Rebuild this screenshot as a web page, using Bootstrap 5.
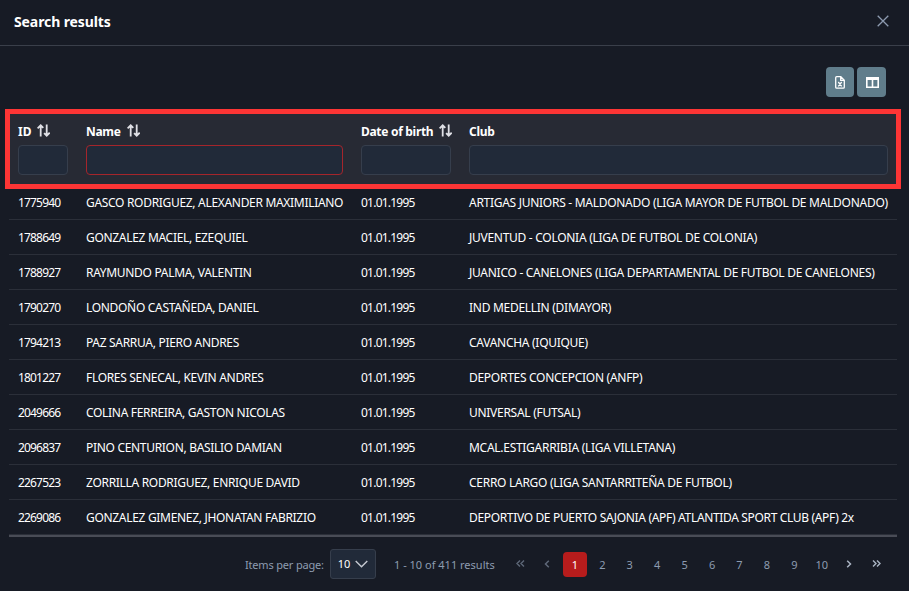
<!DOCTYPE html>
<html lang="en" data-bs-theme="dark">
<head>
<meta charset="utf-8">
<meta name="viewport" content="width=device-width, initial-scale=1">
<title>Search results</title>
<link href="https://cdn.jsdelivr.net/npm/bootstrap@5.3.0/dist/css/bootstrap.min.css" rel="stylesheet">
<style>
body{background:#171b25;color:#fff;font:12px/18px "Noto Sans",sans-serif;height:591px;overflow:hidden}
.dialog-head{height:46px;border-bottom:1px solid #3a3f4a;padding:0 20px 2px 14px}
.dialog-head h1{font-size:14px;font-weight:700;letter-spacing:-.1px;padding-top:2px}
.dialog-head svg{margin-bottom:2px}
.tools{height:63px;padding:21px 23px 0 0;gap:3px}
.tool-btn{width:28px;height:30px;background:#607d8b;border-radius:4px;border:0}
.tool-btn.wide{width:29px;padding-left:1px!important}
.results{padding:0 12px 0 9px}
.grid{table-layout:fixed;width:888px;border-collapse:separate;border-spacing:0;border-bottom:2px solid #494c56}
.grid th{background:#272a34;height:76px;padding:13px 9px 0;vertical-align:top}
.grid th .cap{height:19px;gap:6px;white-space:nowrap;font-weight:700;letter-spacing:-.3px}
.grid th:first-child .cap{letter-spacing:0}
.grid th .cap svg{margin-bottom:2px}
.grid th input{height:30px;margin-top:4px;background:#212a39;border:1px solid #363e4c;border-radius:4px;padding:0}
.grid th input.invalid{border-color:#a5252b}
.grid td{height:35px;padding:2px 9px 0;border-bottom:1px solid #2b2f39;white-space:nowrap;vertical-align:middle;letter-spacing:-.28px}
.grid td:nth-child(1){letter-spacing:-.83px}
.grid td:nth-child(2){letter-spacing:-.31px}
.grid td:nth-child(3){letter-spacing:-.77px}
.grid tr:last-child td:last-child{letter-spacing:-.34px}
.outline-frame{left:5px;top:109px;width:896px;height:80px;border:5px solid #fd3535}
.pager{height:54px;color:#8d9bb0;font-size:11px;padding-left:245px}
.items-label{width:85px;letter-spacing:-.18px;padding-top:1px}
.range-label{width:132px;padding:1px 0 0 18px}
.size-btn{width:46px;height:30px;background:#212a39;border:1px solid #363e4c;border-radius:3px;color:#fff;font-size:11px;gap:5px;padding:0}
.pg{width:24px;height:25px;margin-right:3.45px;border-radius:4px;padding-top:2px}
.pg svg{margin-bottom:3px}
.pg.current{background:#b71c1c;color:#fff}
.dim{opacity:.6}
svg{display:block;flex:none}
</style>
</head>
<body>
<svg width="0" height="0" class="position-absolute"><defs>
<g id="sort" fill="none" stroke="#dfe0e6" stroke-width="1.8"><path d="M3.7 12.5V1.7M.6 4.4 3.7 1.3 6.3 3.9M9.7.5v11M7.1 9.1l2.6 2.6 3-3"/></g>
</defs></svg>
<header class="dialog-head d-flex align-items-center justify-content-between">
<h1 class="m-0">Search results</h1>
<svg width="12" height="12" fill="none" stroke="#8d9bb0" stroke-width="1.3"><path d="M.7.7l10.6 10.6M11.3.7.7 11.3"/></svg>
</header>
<div class="tools d-flex justify-content-end">
<button class="tool-btn d-flex align-items-center justify-content-center p-0" aria-label="Export"><svg width="10" height="13" fill="none" stroke="#fff" stroke-width="1.3"><path d="M1.7.7h4.1l3.5 3.5v7q0 1-1 1H1.7q-1 0-1-1V1.7q0-1 1-1zM5.7.9v3.4h3.5M3.3 6l3.4 4.4M6.7 6l-3.4 4.4"/></svg></button>
<button class="tool-btn wide d-flex align-items-center justify-content-center p-0" aria-label="Columns"><svg width="13" height="11" fill="none" stroke="#fff" stroke-width="1.6"><path d="M.8.8h11.4v9.4H.8zM6.5 1v9"/><path d="M0 1.5h13" stroke-width="3"/></svg></button>
</div>
<main class="results">
<table class="grid">
<colgroup><col style="width:68px"><col style="width:275px"><col style="width:108px"><col style="width:437px"></colgroup>
<thead><tr>
<th><div class="cap d-flex align-items-center">ID <svg width="13" height="13"><use href="#sort"/></svg></div><input class="form-control" aria-label="ID"></th>
<th><div class="cap d-flex align-items-center">Name <svg width="13" height="13"><use href="#sort"/></svg></div><input class="form-control invalid" aria-label="Name"></th>
<th><div class="cap d-flex align-items-center">Date of birth <svg width="13" height="13"><use href="#sort"/></svg></div><input class="form-control" aria-label="Date of birth"></th>
<th><div class="cap d-flex align-items-center">Club</div><input class="form-control" aria-label="Club"></th>
</tr></thead>
<tbody>
<tr><td>1775940</td><td>GASCO RODRIGUEZ, ALEXANDER MAXIMILIANO</td><td>01.01.1995</td><td>ARTIGAS JUNIORS - MALDONADO (LIGA MAYOR DE FUTBOL DE MALDONADO)</td></tr>
<tr><td>1788649</td><td>GONZALEZ MACIEL, EZEQUIEL</td><td>01.01.1995</td><td>JUVENTUD - COLONIA (LIGA DE FUTBOL DE COLONIA)</td></tr>
<tr><td>1788927</td><td>RAYMUNDO PALMA, VALENTIN</td><td>01.01.1995</td><td>JUANICO - CANELONES (LIGA DEPARTAMENTAL DE FUTBOL DE CANELONES)</td></tr>
<tr><td>1790270</td><td>LONDOÑO CASTAÑEDA, DANIEL</td><td>01.01.1995</td><td>IND MEDELLIN (DIMAYOR)</td></tr>
<tr><td>1794213</td><td>PAZ SARRUA, PIERO ANDRES</td><td>01.01.1995</td><td>CAVANCHA (IQUIQUE)</td></tr>
<tr><td>1801227</td><td>FLORES SENECAL, KEVIN ANDRES</td><td>01.01.1995</td><td>DEPORTES CONCEPCION (ANFP)</td></tr>
<tr><td>2049666</td><td>COLINA FERREIRA, GASTON NICOLAS</td><td>01.01.1995</td><td>UNIVERSAL (FUTSAL)</td></tr>
<tr><td>2096837</td><td>PINO CENTURION, BASILIO DAMIAN</td><td>01.01.1995</td><td>MCAL.ESTIGARRIBIA (LIGA VILLETANA)</td></tr>
<tr><td>2267523</td><td>ZORRILLA RODRIGUEZ, ENRIQUE DAVID</td><td>01.01.1995</td><td>CERRO LARGO (LIGA SANTARRITEÑA DE FUTBOL)</td></tr>
<tr><td>2269086</td><td>GONZALEZ GIMENEZ, JHONATAN FABRIZIO</td><td>01.01.1995</td><td>DEPORTIVO DE PUERTO SAJONIA (APF) ATLANTIDA SPORT CLUB (APF) 2x</td></tr>
</tbody>
</table>
</main>
<footer class="pager d-flex align-items-center">
<span class="items-label">Items per page:</span>
<button class="size-btn d-flex align-items-center justify-content-center">10 <svg width="13" height="8" fill="none" stroke="#c6cad2" stroke-width="1.4"><path d="M.7 1l5.8 5.8L12.3 1"/></svg></button>
<span class="range-label">1 - 10 of 411 results</span>
<nav class="d-flex align-items-center" aria-label="Pages">
<span class="pg dim d-flex align-items-center justify-content-center"><svg width="9" height="7" fill="none" stroke="#8d9bb0" stroke-width="1.4"><path d="M4 .5l-3 3 3 3M8 .5l-3 3 3 3"/></svg></span>
<span class="pg dim d-flex align-items-center justify-content-center"><svg width="6" height="8" fill="none" stroke="#8d9bb0" stroke-width="1.5"><path d="M4.8.7 1.5 4l3.3 3.3"/></svg></span>
<span class="pg current d-flex align-items-center justify-content-center">1</span>
<span class="pg d-flex align-items-center justify-content-center">2</span>
<span class="pg d-flex align-items-center justify-content-center">3</span>
<span class="pg d-flex align-items-center justify-content-center">4</span>
<span class="pg d-flex align-items-center justify-content-center">5</span>
<span class="pg d-flex align-items-center justify-content-center">6</span>
<span class="pg d-flex align-items-center justify-content-center">7</span>
<span class="pg d-flex align-items-center justify-content-center">8</span>
<span class="pg d-flex align-items-center justify-content-center">9</span>
<span class="pg d-flex align-items-center justify-content-center">10</span>
<span class="pg d-flex align-items-center justify-content-center"><svg width="6" height="8" fill="none" stroke="#aab4c3" stroke-width="1.5"><path d="M1.2.7 4.5 4 1.2 7.3"/></svg></span>
<span class="pg d-flex align-items-center justify-content-center"><svg width="9" height="7" fill="none" stroke="#aab4c3" stroke-width="1.4"><path d="M1 .5l3 3-3 3M5 .5l3 3-3 3"/></svg></span>
</nav>
</footer>
<div class="outline-frame position-absolute"></div>
<script src="https://cdn.jsdelivr.net/npm/bootstrap@5.3.0/dist/js/bootstrap.bundle.min.js"></script>
</body>
</html>
